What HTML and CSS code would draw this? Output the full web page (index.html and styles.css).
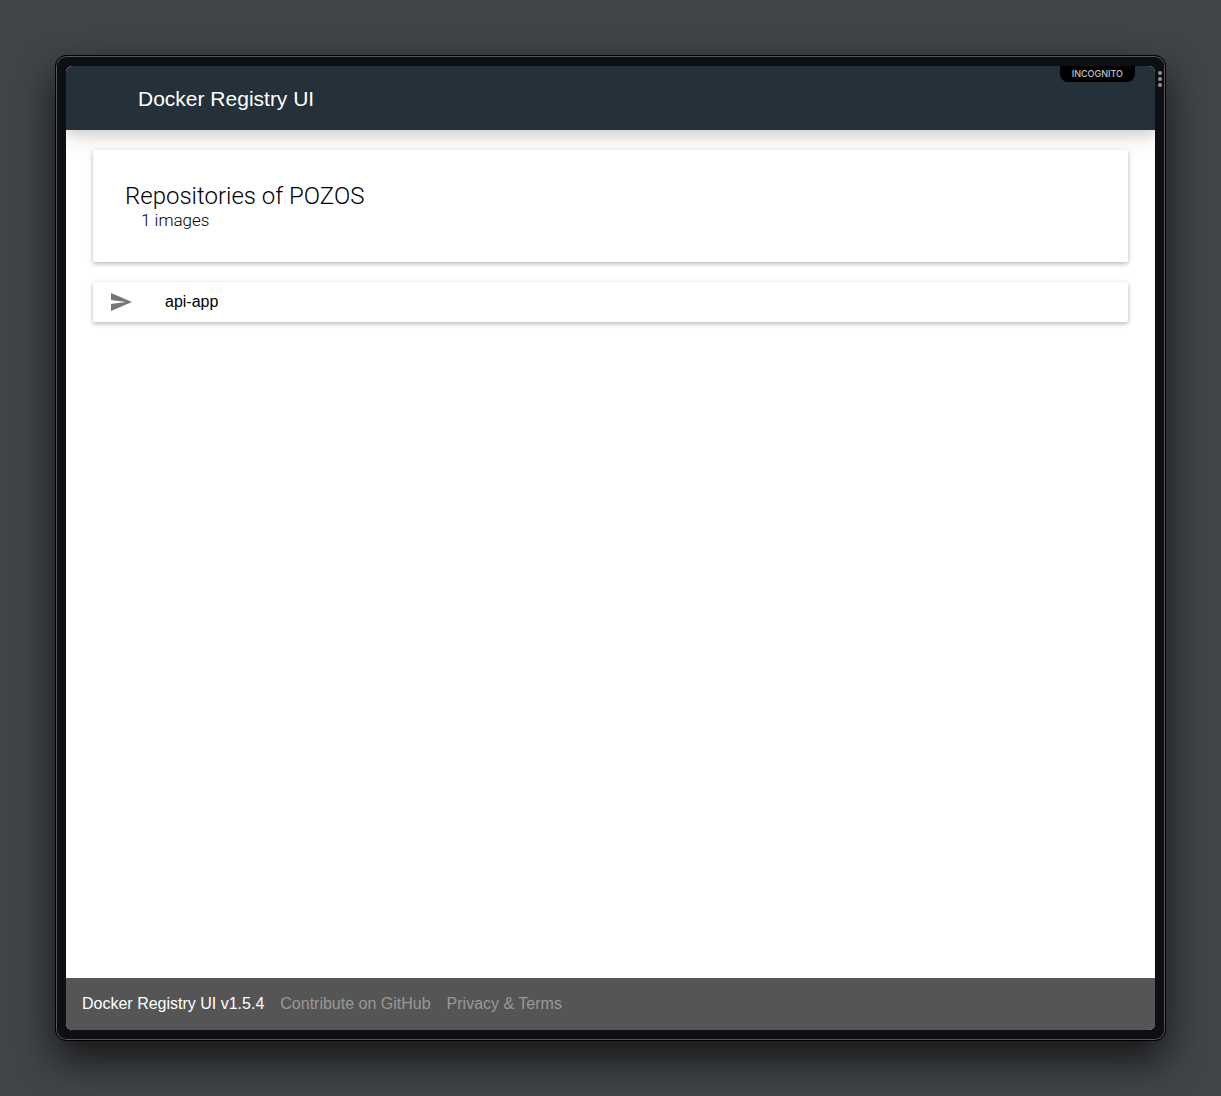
FILE: index.html
```html
<!DOCTYPE html>
<html lang="en">
<head>
  <meta charset="utf-8">
  <meta name="viewport" content="width=device-width, initial-scale=1">
  <title>Docker Registry UI</title>
  <link rel="stylesheet" href="styles.css">
</head>
<body>
  <div class="window">
    <div class="screen">
      <header class="header">
        <h1 class="header-title">Docker Registry UI</h1>
      </header>
      <main class="content">
        <section class="card summary">
          <h2 class="summary-title">Repositories of POZOS</h2>
          <p class="summary-count">1 images</p>
        </section>
        <ul class="card repositories">
          <li>
            <a class="repository" href="#api-app">
              <svg class="send-icon" viewBox="0 0 24 24" aria-hidden="true"><path d="M2.01 21L23 12 2.01 3 2 10l15 2-15 2z"/></svg>
              <span>api-app</span>
            </a>
          </li>
        </ul>
      </main>
      <footer class="footer">
        <span class="footer-name">Docker Registry UI v1.5.4</span>
        <a class="footer-link" href="#github">Contribute on GitHub</a>
        <a class="footer-link" href="#privacy">Privacy &amp; Terms</a>
      </footer>
    </div>
    <span class="incognito">INCOGNITO</span>
    <button class="menu" type="button" aria-label="Menu">
      <span class="dot"></span><span class="dot"></span><span class="dot"></span>
    </button>
  </div>
</body>
</html>
```
FILE: styles.css
```css
* {
  box-sizing: border-box;
}

body {
  display: flex;
  min-height: 100vh;
  margin: 0;
  padding: 55px;
  background: #414448;
  font-family: "Liberation Sans", Arial, sans-serif;
  font-size: 16px;
  line-height: 20px;
}

h1,
h2,
p,
ul {
  margin: 0;
  padding: 0;
  font-weight: 400;
}

.window {
  position: relative;
  display: flex;
  flex: 1;
  min-width: 0;
  padding: 10px;
  border: 1px solid #000;
  border-radius: 11px;
  background: #0e0f13;
  box-shadow: inset 0 0 0 1px #55565a, 0 18px 40px rgba(0, 0, 0, 0.7);
}

.screen {
  display: flex;
  flex: 1;
  flex-direction: column;
  min-width: 0;
  overflow: hidden;
  border-radius: 6px;
  background: #fff;
}

.header {
  display: flex;
  align-items: center;
  height: 64px;
  padding: 2px 72px 0;
  background: #25313a;
  box-shadow: inset 0 -1px #2b2c40, 0 4px 10px rgba(0, 0, 0, 0.1), 0 8px 20px rgba(0, 0, 0, 0.12);
  color: #fff;
}

.header-title {
  font-size: 21px;
  line-height: 24px;
}

.content {
  display: flex;
  flex: 1;
  flex-direction: column;
  gap: 20px;
  padding: 20px 27px;
}

.card {
  border-radius: 2px;
  background: #fff;
  box-shadow: 0 2px 4px rgba(0, 0, 0, 0.2), 0 1px 6px rgba(0, 0, 0, 0.1);
  color: #000;
}

.summary {
  padding: 32px;
  font-family: Roboto, sans-serif;
}

.summary-title {
  font-size: 24px;
  font-weight: 300;
  line-height: 28px;
}

.summary-count {
  padding-left: 16px;
  font-size: 17px;
  font-weight: 300;
}

.repositories {
  list-style: none;
}

.repository {
  display: flex;
  align-items: center;
  gap: 32px;
  height: 40px;
  padding: 0 16px;
  color: inherit;
  text-decoration: none;
}

.send-icon {
  width: 24px;
  height: 24px;
  fill: #757575;
}

.footer {
  display: flex;
  flex-wrap: wrap;
  gap: 16px;
  padding: 16px;
  background: #555;
}

.footer-name {
  color: #fff;
}

.footer-link {
  color: #999;
  text-decoration: none;
}

.incognito {
  position: absolute;
  top: 10px;
  right: 30px;
  padding: 0 12px;
  border-radius: 0 0 8px 8px;
  background: #000;
  color: #c4c4c4;
  font-family: Inter, sans-serif;
  font-size: 9px;
  font-weight: 500;
  line-height: 16px;
}

.menu {
  position: absolute;
  top: 15px;
  right: 3px;
  display: flex;
  flex-direction: column;
  gap: 2px;
  padding: 0;
  border: 0;
  background: none;
}

.dot {
  width: 4px;
  height: 4px;
  border-radius: 50%;
  background: #929292;
}
```
